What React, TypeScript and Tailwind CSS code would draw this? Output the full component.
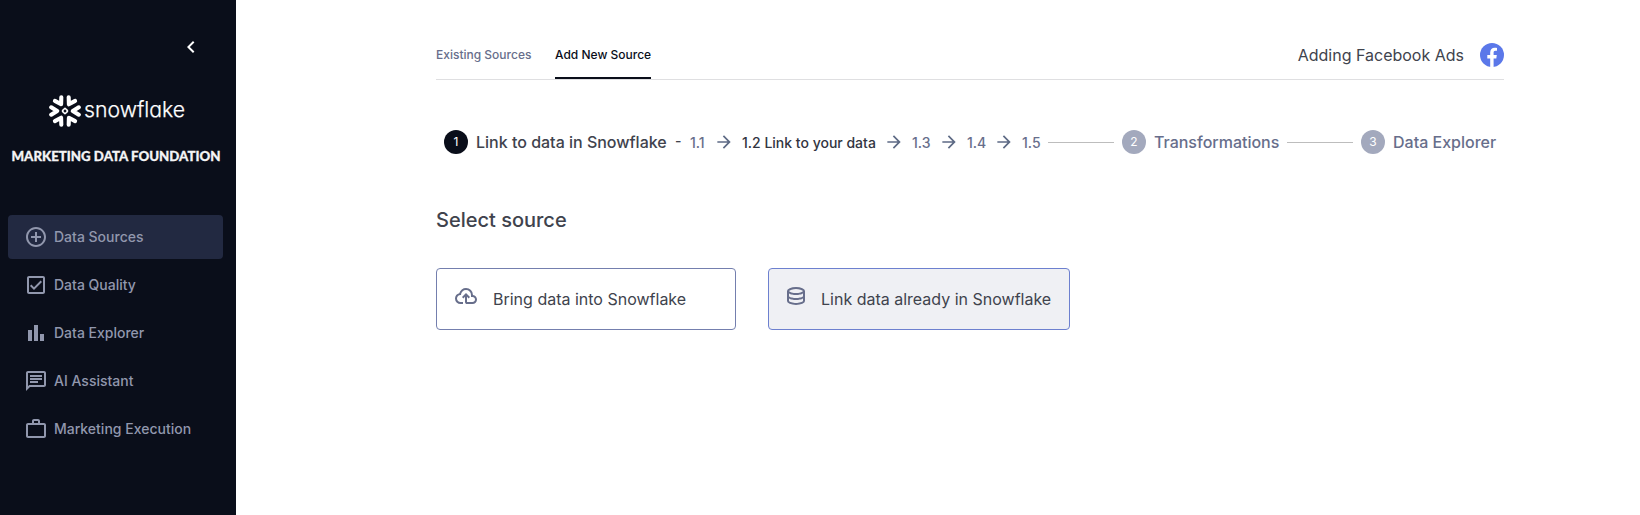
import type { ReactNode } from "react";
import {
  MdAddCircleOutline,
  MdArrowForward,
  MdChevronLeft,
  MdOutlineCheckBox,
  MdOutlineChat,
  MdWorkOutline,
} from "react-icons/md";

const navItems = [
  { label: "Data Sources", icon: <MdAddCircleOutline size={24} />, active: true },
  { label: "Data Quality", icon: <MdOutlineCheckBox size={24} />, active: false },
  {
    label: "Data Explorer",
    icon: (
      <svg width="24" height="24" viewBox="0 0 24 24" fill="currentColor">
        <path d="M4 9h4v11H4zM16 13h4v7h-4zM10 4h4v16h-4z" />
      </svg>
    ),
    active: false,
  },
  { label: "AI Assistant", icon: <MdOutlineChat size={24} />, active: false },
  { label: "Marketing Execution", icon: <MdWorkOutline size={24} />, active: false },
];

function SnowflakeMark() {
  return (
    <svg width="32" height="32" viewBox="0 0 32 32" fill="none" stroke="#fff" strokeWidth="4.1" strokeLinecap="round" strokeLinejoin="round">
      {[0, 60, 120, 180, 240, 300].map((angle) => (
        <path key={angle} d="M2.2 12.3 8.2 16 2.2 19.7" transform={`rotate(${angle} 16 16)`} />
      ))}
      <rect x="14" y="14" width="4" height="4" rx="0.8" strokeWidth="1.6" transform="rotate(45 16 16)" />
    </svg>
  );
}

function Sidebar() {
  return (
    <aside className="flex h-full w-[236px] shrink-0 flex-col bg-[#0a0e1a]">
      <div className="flex h-[95px] justify-end pt-[35px] pr-[33px] text-white">
        <MdChevronLeft size={24} />
      </div>
      <div className="flex h-8 items-center pl-[48.5px]">
        <SnowflakeMark />
        <svg width="106" height="32" viewBox="0 0 106 32" className="ml-[3px]">
          <text x="0" y="22" fill="#fff" textLength="101" lengthAdjust="spacingAndGlyphs" className="font-['Inter',sans-serif] text-[22px] font-light [font-feature-settings:'cv11']" stroke="#fff" strokeWidth="0.25">
            snowflake
          </text>
        </svg>
      </div>
      <svg width="236" height="24" viewBox="0 0 236 24" className="mt-[17px]">
        <text x="11.5" y="17" fill="#f4f4f5" stroke="#f4f4f5" strokeWidth="0.3" textLength="209" lengthAdjust="spacingAndGlyphs" className="font-['Lato',sans-serif] text-[14px] font-black">
          MARKETING DATA FOUNDATION
        </text>
      </svg>
      <nav className="mt-[47px] flex flex-col gap-1 pl-2">
        {navItems.map((item) => (
          <a
            key={item.label}
            className={`flex h-11 w-[215px] items-center rounded pl-4 text-[14px] font-medium text-[#9197ad] ${item.active ? "bg-[#222941]" : ""}`}
          >
            {item.icon}
            <span className="mb-px ml-[6px]">{item.label}</span>
          </a>
        ))}
      </nav>
    </aside>
  );
}

function StepCircle({ n, active = false }: { n: number; active?: boolean }) {
  return (
    <span className={`flex size-6 shrink-0 items-center justify-center rounded-full text-[12px] text-white ${active ? "bg-[#0a0e1a]" : "bg-[#a3a9bd]"}`}>
      {n}
    </span>
  );
}

function Arrow() {
  return <MdArrowForward size={20} className="shrink-0 text-[#5d6a85]" />;
}

function Stepper() {
  return (
    <div className="mt-[50px] flex h-6 items-center pl-2 whitespace-nowrap">
      <StepCircle n={1} active />
      <span className="ml-2 w-[192px] text-[16px] font-medium text-[#40434d]">Link to data in Snowflake</span>
      <span className="mb-[3px] ml-[7px] w-[15px] text-[14px] font-medium text-[#40434d]">-</span>
      <div className="flex items-center text-[14px] font-medium text-[#676e8b]">
        <span className="w-[24px]">1.1</span>
        <Arrow />
        <span className="ml-[8px] w-[142px] text-[#32353f]">1.2 Link to your data</span>
        <Arrow />
        <span className="ml-[8px] w-[27px]">1.3</span>
        <Arrow />
        <span className="ml-[8px] w-[27px]">1.4</span>
        <Arrow />
        <span className="ml-[8px] w-[26px]">1.5</span>
      </div>
      <span className="h-px w-[66px] bg-[#bdbdbd]" />
      <span className="ml-2">
        <StepCircle n={2} />
      </span>
      <span className="ml-2 w-[125px] text-[16px] font-medium text-[#676e8b]">Transformations</span>
      <span className="ml-2 h-px w-[66px] bg-[#bdbdbd]" />
      <span className="ml-2">
        <StepCircle n={3} />
      </span>
      <span className="ml-2 text-[16px] font-medium text-[#676e8b]">Data Explorer</span>
    </div>
  );
}

function CloudUploadIcon() {
  return (
    <svg width="24" height="24" viewBox="0 0 24 24" fill="currentColor">
      <path d="M6.5 20q-2.28 0-3.89-1.57Q1 16.85 1 14.58 1 12.63 2.17 11.1q1.18-1.53 3.08-1.95.63-2.3 2.5-3.72Q9.63 4 12 4q2.93 0 4.96 2.04Q19 8.07 19 11q1.73.2 2.86 1.5 1.14 1.28 1.14 3 0 1.88-1.31 3.19T18.5 20H13q-.82 0-1.41-.59Q11 18.83 11 18v-5.15L9.4 14.4 8 13l4-4 4 4-1.4 1.4-1.6-1.55V18h5.5q1.05 0 1.77-.73.73-.72.73-1.77t-.73-1.77Q19.55 13 18.5 13H17v-2q0-2.07-1.46-3.54Q14.08 6 12 6 9.93 6 8.46 7.46 7 8.93 7 11h-.5q-1.45 0-2.47 1.03Q3 13.05 3 14.5q0 1.45 1.03 2.48Q5.05 18 6.5 18H9v2Z" />
    </svg>
  );
}

function DatabaseIcon() {
  return (
    <svg width="24" height="24" viewBox="0 0 24 24" fill="currentColor">
      <path d="M12 21q-3.775 0-6.387-1.162T3 17V7q0-1.65 2.638-2.825T12 3t6.363 1.175T21 7v10q0 1.675-2.613 2.838T12 21m0-11.975q2.225 0 4.475-.638T19 7.025q-.275-.725-2.512-1.375T12 5q-2.275 0-4.462.638T5 7.025q.35.75 2.538 1.375T12 9.025M12 14q1.05 0 2.025-.1t1.863-.288t1.675-.462T19 12.525v-3q-.65.35-1.437.625t-1.675.463t-1.863.287T12 11t-2.05-.1t-1.888-.288T6.4 10.15T5 9.525v3q.625.35 1.4.625t1.663.463t1.887.287T12 14m0 5q1.15 0 2.338-.175t2.187-.462t1.675-.65t.8-.738v-2.45q-.65.35-1.437.625t-1.675.463t-1.863.287T12 16t-2.05-.1t-1.888-.288T6.4 15.15T5 14.525V17q.125.375.788.725t1.662.638t2.2.462T12 19" />
    </svg>
  );
}

function SourceCard({ icon, label, className }: { icon: ReactNode; label: string; className: string }) {
  return (
    <button className={`flex h-[62px] items-start rounded border text-left text-[16px] text-[#40434d] ${className}`}>
      <span className="mt-[15px] text-[#676e8b]">{icon}</span>
      <span className="mt-[18px] whitespace-nowrap">{label}</span>
    </button>
  );
}

export default function App() {
  return (
    <div className="flex h-[515px] w-[1640px] overflow-hidden bg-white font-['Inter',sans-serif]">
      <Sidebar />
      <main className="ml-[200px] w-[1068px]">
        <header className="flex h-20 items-end justify-between border-b border-[#dfdfe1]">
          <div className="flex gap-6 text-[12px] leading-4 font-medium whitespace-nowrap">
            <a className="h-8 w-[95px] text-[#676e8b]">Existing Sources</a>
            <a className="h-8 w-24 border-b-2 border-[#0a0e1a] text-[#0a0e1a]">Add New Source</a>
          </div>
          <div className="mb-3 flex items-center gap-4 text-[16px] leading-6 text-[#40434d]">
            Adding Facebook Ads
            <svg width="24" height="24" viewBox="0 0 24 24">
              <circle cx="12" cy="12" r="12" fill="#5b78e9" />
              <path fill="#fff" d="M10.2 24v-8.5H7.3V12h2.9V9.4c0-3 1.8-4.7 4.5-4.7 1.3 0 2.3.2 2.3.2v2.9h-1.5c-1.5 0-1.9.9-1.9 1.8V12h3.2l-.5 3.5h-2.7V24z" />
            </svg>
          </div>
        </header>
        <Stepper />
        <h1 className="mt-[52px] text-[20px] leading-7 font-medium text-[#40434d]">Select source</h1>
        <div className="mt-[34px] flex gap-8">
          <SourceCard className="w-[300px] gap-[15px] border-[#747fae] pl-[17px]" icon={<CloudUploadIcon />} label="Bring data into Snowflake" />
          <SourceCard className="w-[302px] gap-[13px] border-[#6d80cf] bg-[#eff0f4] pl-[15px]" icon={<DatabaseIcon />} label="Link data already in Snowflake" />
        </div>
      </main>
    </div>
  );
}
